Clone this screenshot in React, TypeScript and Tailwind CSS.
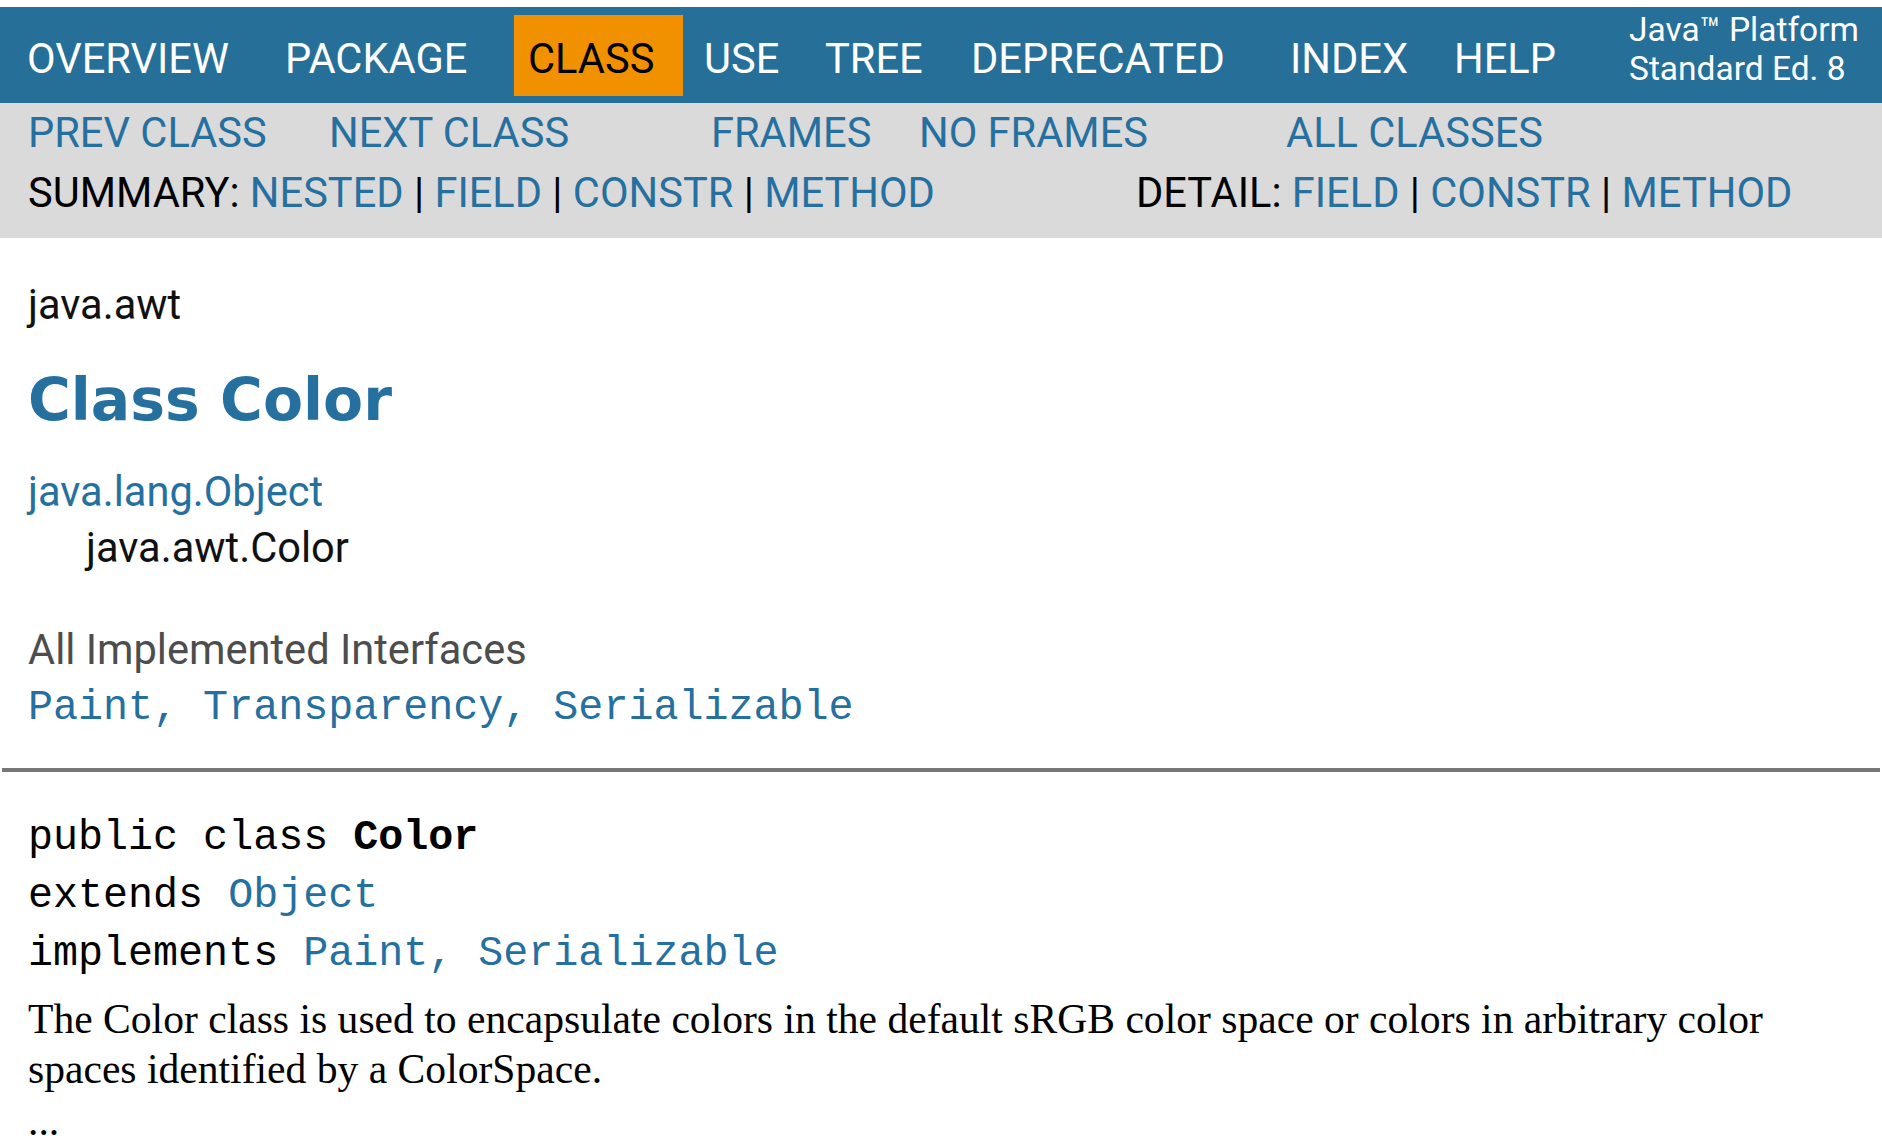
const roboto = { fontFamily: 'Roboto, "Liberation Sans", sans-serif' };
const mono = { fontFamily: '"Courier New", "Nimbus Mono PS", "Liberation Mono", monospace' };

const navItems = [
  { label: 'OVERVIEW', cls: 'w-[258px]' },
  { label: 'PACKAGE', cls: 'w-[229px]' },
  { label: 'CLASS', cls: 'w-[169px] pl-[14px] bg-[#f29100] text-black' },
  { label: 'USE', cls: 'ml-[21px] w-[121px]' },
  { label: 'TREE', cls: 'w-[146px]' },
  { label: 'DEPRECATED', cls: 'w-[319px]' },
  { label: 'INDEX', cls: 'w-[164px]' },
  { label: 'HELP', cls: 'w-[175px]' },
];

const subLinks = [
  { label: 'PREV CLASS', cls: 'w-[301px]' },
  { label: 'NEXT CLASS', cls: 'w-[382px]' },
  { label: 'FRAMES', cls: 'w-[208px]' },
  { label: 'NO FRAMES', cls: 'w-[367px]' },
  { label: 'ALL CLASSES', cls: '' },
];

function Links({ items }: { items: string[] }) {
  return (
    <>
      {items.map((item, i) => (
        <span key={item}>
          {i > 0 && <span className="text-black"> | </span>}
          <a className="text-[#2670a0]">{item}</a>
        </span>
      ))}
    </>
  );
}

export default function App() {
  return (
    <div className="min-h-[1145px] bg-white pt-[7px]" style={roboto}>
      {/* top nav */}
      <div className="flex h-[96px] items-start bg-[#256f99] pl-[27px] pt-[8px] text-[41.6px] text-white">
        {navItems.map((item) => (
          <div
            key={item.label}
            className={`flex-none pt-[24px] pb-[17px] leading-[40px] ${item.cls}`}
          >
            {item.label}
          </div>
        ))}
        <div className="flex-none -mt-[5px] text-[33.5px] leading-[39px] whitespace-nowrap">
          <div>Java™ Platform</div>
          <div>Standard Ed. 8</div>
        </div>
      </div>

      {/* sub nav */}
      <div className="h-[135px] bg-[#dadada] pl-[28px] text-[41.6px] leading-[60px]">
        <div className="flex text-[#2670a0]">
          {subLinks.map((l) => (
            <div key={l.label} className={`flex-none ${l.cls}`}>
              {l.label}
            </div>
          ))}
        </div>
        <div className="flex whitespace-pre">
          <div className="w-[1108px] flex-none">
            <span className="text-black">SUMMARY: </span>
            <Links items={['NESTED', 'FIELD', 'CONSTR', 'METHOD']} />
          </div>
          <div>
            <span className="text-black">DETAIL: </span>
            <Links items={['FIELD', 'CONSTR', 'METHOD']} />
          </div>
        </div>
      </div>

      {/* content */}
      <div className="px-[28px]">
        <div className="mt-[43px] text-[41.6px] leading-[48px] text-[#111]">java.awt</div>
        <h1
          className="mt-[37px] text-[58.4px] font-bold leading-[68px] text-[#2670a0]"
          style={{ fontFamily: '"DejaVu Sans", Arial, sans-serif' }}
        >
          Class Color
        </h1>
        <div className="mt-[30px] text-[41.6px] leading-[56px]">
          <div className="text-[#2670a0]">java.lang.Object</div>
          <div className="pl-[58px] text-[#111]">java.awt.Color</div>
        </div>
        <div className="mt-[50px] text-[41.6px] leading-[48px] text-[#4d4d4d]">
          All Implemented Interfaces
        </div>
        <div className="mt-[10px] text-[41.7px] leading-[48px] text-[#2670a0] whitespace-pre" style={mono}>
          Paint, Transparency, Serializable
        </div>
      </div>

      <div className="mx-[2px] mt-[36px] h-[4px] bg-[#777777]" />

      <div className="px-[28px]">
        <div className="mt-[37px] text-[41.7px] leading-[58px] text-black whitespace-pre" style={mono}>
          <div>
            public class <b>Color</b>
          </div>
          <div>
            extends <span className="text-[#2670a0]">Object</span>
          </div>
          <div>
            implements <span className="text-[#2670a0]">Paint, Serializable</span>
          </div>
        </div>
        <div
          className="mt-[11px] w-[1790px] text-[41.6px] leading-[50px] text-black"
          style={{ fontFamily: '"Liberation Serif", "Times New Roman", serif' }}
        >
          <p>
            The Color class is used to encapsulate colors in the default sRGB color space or colors in
            arbitrary color spaces identified by a ColorSpace.
          </p>
          <p className="mt-[2px]">...</p>
        </div>
      </div>
    </div>
  );
}
